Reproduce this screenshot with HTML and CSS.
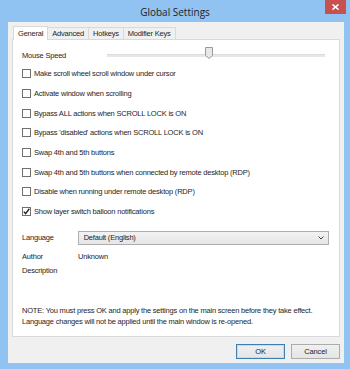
FILE: index.html
```html
<!DOCTYPE html>
<html>
<head>
<meta charset="utf-8">
<link rel="stylesheet" href="styles.css">
</head>
<body>
<div class="window">
  <div class="titlebar">
    <span></span>
    <span class="title">Global Settings</span>
    <span class="close"><svg width="7" height="6" viewBox="0 0 7 6"><path d="M0.5 0.5 L6.5 5.5 M6.5 0.5 L0.5 5.5" stroke="#fff" stroke-width="1.6"/></svg></span>
  </div>
  <div class="client">
    <div class="tabs">
      <span class="tab active">General</span>
      <span class="tab">Advanced</span>
      <span class="tab">Hotkeys</span>
      <span class="tab">Modifier Keys</span>
    </div>
    <div class="panel">
      <div class="speed">
        <span class="label">Mouse Speed</span>
        <div class="slider">
          <div class="track"></div>
          <div class="thumb"><svg width="8" height="12" viewBox="0 0 8 12"><path d="M0.5 0.5 H7.5 V8.5 L4 11.5 L0.5 8.5 Z" fill="#e8e8e8" stroke="#9a9a9a"/></svg></div>
        </div>
      </div>
      <div class="checks">
        <div class="check"><span class="box"></span>Make scroll wheel scroll window under cursor</div>
        <div class="check"><span class="box"></span>Activate window when scrolling</div>
        <div class="check"><span class="box"></span>Bypass ALL actions when SCROLL LOCK is ON</div>
        <div class="check"><span class="box"></span>Bypass 'disabled' actions when SCROLL LOCK is ON</div>
        <div class="check"><span class="box"></span>Swap 4th and 5th buttons</div>
        <div class="check"><span class="box"></span>Swap 4th and 5th buttons when connected by remote desktop (RDP)</div>
        <div class="check"><span class="box"></span>Disable when running under remote desktop (RDP)</div>
        <div class="check"><span class="box checked"><svg width="7" height="7" viewBox="0 0 7 7"><path d="M0.8 3.6 L2.6 5.6 L6.3 0.8" fill="none" stroke="#222" stroke-width="1.4"/></svg></span>Show layer switch balloon notifications</div>
      </div>
      <div class="lang">
        <span class="label">Language</span>
        <div class="select"><span>Default (English)</span><svg width="6" height="4" viewBox="0 0 6 4"><path d="M0.5 0.5 L3 3 L5.5 0.5" fill="none" stroke="#444" stroke-width="1"/></svg></div>
      </div>
      <div class="info">
        <span class="label">Author</span><span>Unknown</span>
        <span class="label">Description</span><span></span>
      </div>
      <div class="note">NOTE: You must press OK and apply the settings on the main screen before they take effect.<br>Language changes will not be applied until the main window is re-opened.</div>
    </div>
    <div class="buttons">
      <button class="btn default">OK</button>
      <button class="btn">Cancel</button>
    </div>
  </div>
</div>
</body>
</html>
```
FILE: styles.css
```css
html, body {
  margin: 0;
  padding: 0;
}
body {
  width: 350px;
  height: 369px;
  overflow: hidden;
  font-family: "Liberation Sans", Arial, sans-serif;
  font-size: 7.5px;
  letter-spacing: -0.2px;
  color: #1e1e1e;
}
.window {
  width: 350px;
  height: 369px;
  background: #90c2f2;
  display: flex;
  flex-direction: column;
}
.titlebar {
  height: 22px;
  display: grid;
  grid-template-columns: 1fr auto 1fr;
  align-items: center;
}
.title {
  font-family: "Open Sans", sans-serif;
  font-size: 10px;
  letter-spacing: 0;
  color: #222;
  padding-top: 1px;
}
.close {
  justify-self: end;
  align-self: start;
  margin-right: 4px;
  width: 21px;
  height: 14px;
  background: #c75050;
  display: flex;
  align-items: center;
  justify-content: center;
}
.client {
  margin: 0 6px 6px 8px;
  height: 341px;
  background: #f0f0f0;
  display: flex;
  flex-direction: column;
  padding: 3px 4px 0 4px;
  box-sizing: border-box;
}
.tabs {
  display: flex;
  align-items: flex-end;
  height: 14px;
  padding-left: 1px;
}
.tab {
  height: 11px;
  line-height: 11px;
  padding: 0 4px;
  border: 1px solid #d9d9d9;
  border-bottom: none;
  border-left: none;
  background: #f0f0f0;
}
.tab.active {
  height: 13px;
  line-height: 13px;
  background: #fff;
  border-left: 1px solid #d9d9d9;
  margin-bottom: -1px;
  position: relative;
  z-index: 1;
}
.panel {
  height: 298px;
  background: #fff;
  border: 1px solid #d9d9d9;
  box-sizing: border-box;
  padding: 9px 10px 0 9px;
  display: flex;
  flex-direction: column;
}
.speed {
  display: flex;
  align-items: center;
  height: 12px;
}
.speed .label {
  width: 85px;
}
.slider {
  position: relative;
  width: 218px;
  height: 12px;
  display: flex;
  align-items: center;
}
.track {
  width: 100%;
  height: 2px;
  background: #e7e7e7;
  border-top: 1px solid #dcdcdc;
}
.thumb {
  position: absolute;
  left: 98px;
  top: -2px;
  display: flex;
}
.checks {
  margin-top: 3px;
  display: flex;
  flex-direction: column;
}
.check {
  height: 19.7px;
  display: flex;
  align-items: center;
}
.box {
  width: 9px;
  height: 9px;
  box-sizing: border-box;
  border: 1px solid #707070;
  background: #fff;
  margin-right: 3px;
  display: flex;
  align-items: center;
  justify-content: center;
}
.lang {
  margin-top: 9px;
  display: flex;
  align-items: center;
  height: 14px;
}
.lang .label {
  width: 56px;
}
.select {
  width: 253px;
  height: 14px;
  box-sizing: border-box;
  border: 1px solid #adadad;
  background: linear-gradient(#f2f2f2, #e6e6e6);
  display: flex;
  align-items: center;
  justify-content: space-between;
  padding: 0 4px 0 5px;
}
.info {
  margin-top: 6px;
  display: grid;
  grid-template-columns: 56px 1fr;
  row-gap: 3px;
  line-height: 11px;
}
.note {
  margin-top: 29px;
  line-height: 11px;
}
.buttons {
  display: flex;
  justify-content: flex-end;
  gap: 6px;
  padding-top: 7px;
}
.btn {
  width: 49px;
  height: 15px;
  padding: 0;
  font-family: "Liberation Sans", Arial, sans-serif;
  font-size: 7.5px;
  letter-spacing: -0.1px;
  color: #1e1e1e;
  border: 1px solid #acacac;
  background: linear-gradient(#f0f0f0, #e5e5e5);
  border-radius: 0;
}
.btn.default {
  border-color: #3c7fb1;
  box-shadow: inset 0 0 0 1px #c4dcf0;
}
```
